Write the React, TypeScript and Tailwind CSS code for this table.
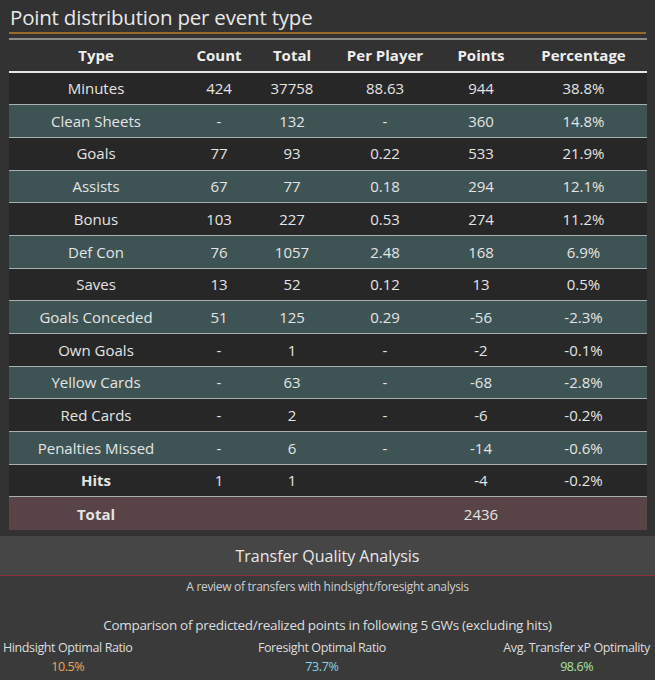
import React from "react";

type Row = { type: string; count: string; total: string; per: string; points: string; pct: string; bold?: boolean };

const rows: Row[] = [
  { type: "Minutes", count: "424", total: "37758", per: "88.63", points: "944", pct: "38.8%" },
  { type: "Clean Sheets", count: "-", total: "132", per: "-", points: "360", pct: "14.8%" },
  { type: "Goals", count: "77", total: "93", per: "0.22", points: "533", pct: "21.9%" },
  { type: "Assists", count: "67", total: "77", per: "0.18", points: "294", pct: "12.1%" },
  { type: "Bonus", count: "103", total: "227", per: "0.53", points: "274", pct: "11.2%" },
  { type: "Def Con", count: "76", total: "1057", per: "2.48", points: "168", pct: "6.9%" },
  { type: "Saves", count: "13", total: "52", per: "0.12", points: "13", pct: "0.5%" },
  { type: "Goals Conceded", count: "51", total: "125", per: "0.29", points: "-56", pct: "-2.3%" },
  { type: "Own Goals", count: "-", total: "1", per: "-", points: "-2", pct: "-0.1%" },
  { type: "Yellow Cards", count: "-", total: "63", per: "-", points: "-68", pct: "-2.8%" },
  { type: "Red Cards", count: "-", total: "2", per: "-", points: "-6", pct: "-0.2%" },
  { type: "Penalties Missed", count: "-", total: "6", per: "-", points: "-14", pct: "-0.6%" },
  { type: "Hits", count: "1", total: "1", per: "", points: "-4", pct: "-0.2%", bold: true },
];

const grid = "grid grid-cols-[174px_72px_74px_112px_80px_125px] items-center text-center";

export default function App() {
  return (
    <div
      className="w-[655px] h-[680px] bg-[#323232] text-[#e4e4e4] overflow-hidden"
      style={{ fontFamily: '"Open Sans", "Noto Sans", sans-serif' }}
    >
      <div className="h-[536px]">
        <div className="pl-[10px] pt-[3px] h-[32px] text-[20.5px] leading-[28px] text-[#e8e8e8] tracking-[-0.2px]">
          Point distribution per event type
        </div>
        <div className="mx-[9px] h-[1.5px] bg-[#9a6a2c]" />
        <div className="ml-[9px] w-[638px] mt-[4px]">
          <div className="h-[2px] bg-[#8c8c8c]" />
          <div className={`${grid} h-[31px] font-bold text-[15px] text-[#eeeeee]`}>
            <div>Type</div>
            <div>Count</div>
            <div>Total</div>
            <div>Per Player</div>
            <div>Points</div>
            <div>Percentage</div>
          </div>
          <div className="h-[2px] bg-[#e6e6e6]" />
          {rows.map((r, i) => (
            <div
              key={r.type}
              className={`${grid} h-[32.7px] border-b-[1.5px] border-[#a9b0b0] text-[15px] ${
                i % 2 === 0 ? "bg-[#272727]" : "bg-[#3e5353]"
              }`}
            >
              <div className={r.bold ? "font-bold" : ""}>{r.type}</div>
              <div>{r.count}</div>
              <div>{r.total}</div>
              <div>{r.per}</div>
              <div>{r.points}</div>
              <div>{r.pct}</div>
            </div>
          ))}
          <div className={`${grid} h-[33px] bg-[#584446] text-[15px]`}>
            <div className="font-bold">Total</div>
            <div />
            <div />
            <div />
            <div>2436</div>
            <div />
          </div>
        </div>
      </div>
      <div className="bg-[#464646] h-[40px] flex items-center justify-center pt-[1px] text-[16px] text-[#e8e8e8] border-b border-[#8a2f3e]">
        Transfer Quality Analysis
      </div>
      <div className="bg-[#3a3a3a] h-[104px] text-[#dddddd]">
        <div className="text-center text-[12px] pt-[2px] leading-[18px] text-[#cfcfcf] tracking-[-0.3px]">
          A review of transfers with hindsight/foresight analysis
        </div>
        <div className="text-center text-[13.5px] mt-[19px] leading-[20px] tracking-[-0.3px]">
          Comparison of predicted/realized points in following 5 GWs (excluding hits)
        </div>
        <div className="flex justify-between pl-[3px] pr-[5px] mt-[3px] text-[12.5px] leading-[19px] tracking-[-0.4px]">
          <div className="flex flex-col items-center">
            <div>Hindsight Optimal Ratio</div>
            <div className="text-[#eba857]">10.5%</div>
          </div>
          <div className="flex flex-col items-center pl-[8px]">
            <div>Foresight Optimal Ratio</div>
            <div className="text-[#84d3e6]">73.7%</div>
          </div>
          <div className="flex flex-col items-center">
            <div>Avg. Transfer xP Optimality</div>
            <div className="text-[#a9e2a3]">98.6%</div>
          </div>
        </div>
      </div>
    </div>
  );
}
